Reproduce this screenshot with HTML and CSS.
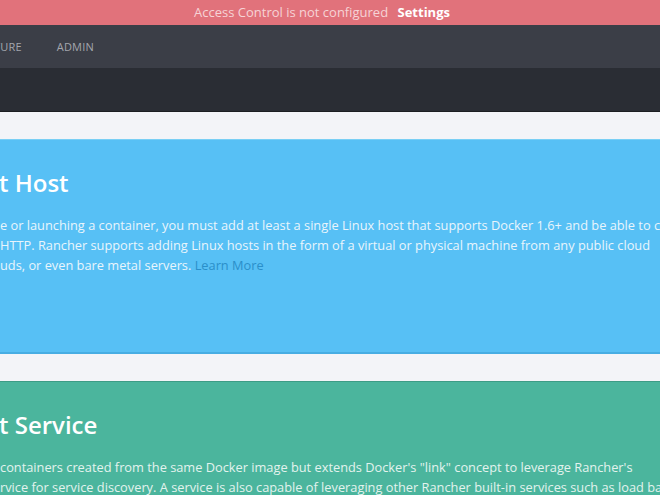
FILE: index.html
```html
<!DOCTYPE html>
<html lang="en">
<head>
    <meta charset="UTF-8">
    <meta name="viewport" content="width=device-width, initial-scale=1.0">
    <title>Rancher</title>
    <link rel="stylesheet" href="styles.css">
</head>
<body>

    <div class="notice">
        <span class="notice-text">Access Control is not configured</span>
        <a class="notice-link" href="#">Settings</a>
    </div>

    <nav class="nav">
        <a class="nav-item" href="#">TURE</a>
        <a class="nav-item" href="#">ADMIN</a>
    </nav>

    <div class="subnav"></div>

    <main class="main">
        <section class="card card-host">
            <h2>t Host</h2>
            <p>
                <span class="line">e or launching a container, you must add at least a single Linux host that supports Docker 1.6+ and be able to communicate</span>
                <span class="line">HTTP. Rancher supports adding Linux hosts in the form of a virtual or physical machine from any public cloud</span>
                <span class="line">uds, or even bare metal servers. <a href="#">Learn More</a></span>
            </p>
        </section>

        <section class="card card-service">
            <h2>t Service</h2>
            <p>
                <span class="line">containers created from the same Docker image but extends Docker's "link" concept to leverage Rancher's</span>
                <span class="line">rvice for service discovery. A service is also capable of leveraging other Rancher built-in services such as load balancers</span>
            </p>
        </section>
    </main>

</body>
</html>
```

FILE: styles.css
```css
body {
    font-family: 'Open Sans', 'Liberation Sans', sans-serif;
    background: #f3f4f8;
    margin: 0;
    overflow: hidden;
}

a {
    text-decoration: none;
}

.notice {
    background: #e1727b;
    height: 25px;
    line-height: 25px;
    font-size: 13px;
    text-align: center;
    padding-right: 16px;
}

.notice-text {
    color: #f6d3d6;
}

.notice-link {
    color: #fff;
    font-weight: bold;
    margin-left: 6px;
}

.nav {
    background: #3b3e47;
    height: 43px;
    display: flex;
    align-items: center;
    gap: 35px;
    margin-left: -6px;
}

.nav-item {
    color: #a3a6ad;
    font-size: 11px;
    letter-spacing: 0.2px;
}

.subnav {
    background: #2a2d34;
    height: 43px;
    border-bottom: 1px solid #1c1e22;
}

.main {
    padding-top: 27px;
}

.card {
    color: #e9f5fc;
    padding-top: 28px;
    white-space: nowrap;
}

.card-host {
    background: #57c0f5;
    border-top: 1px solid #79cff5;
    border-bottom: 2px solid #47ade3;
    height: 184px;
    margin-bottom: 27px;
}

.card-service {
    background: #4bb59d;
    border-top: 1px solid #3d9c86;
    color: #e3f3ee;
    height: 200px;
}

.card h2 {
    color: #fff;
    font-size: 24px;
    font-weight: 600;
    line-height: 30px;
    margin: 0 0 17px -1px;
}

.card p {
    font-size: 12.8px;
    line-height: 20px;
    margin: 0;
}

.line {
    display: block;
}

.card p a {
    color: #2a8fca;
}
```
